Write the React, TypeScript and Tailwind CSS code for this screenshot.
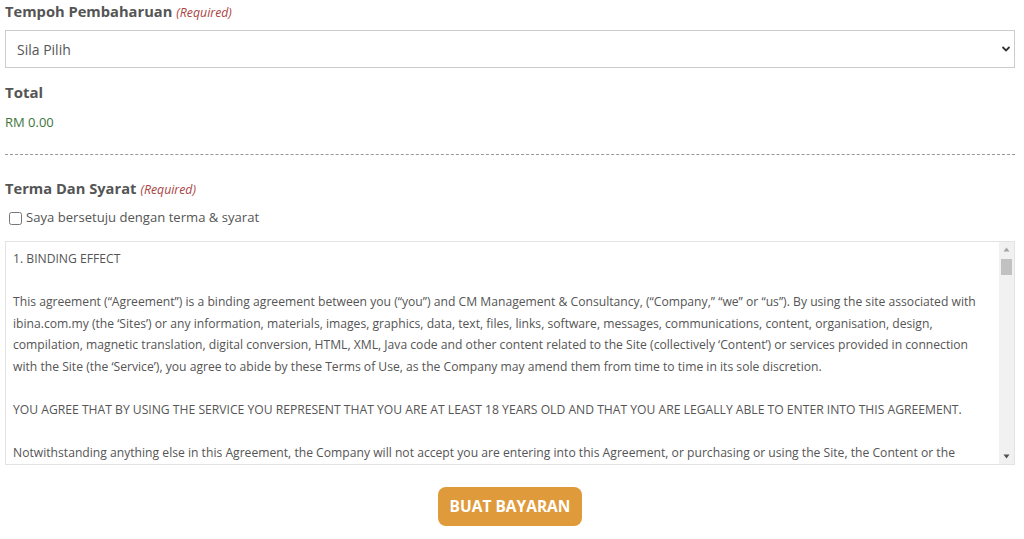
import React from 'react';

const font = { fontFamily: '"Open Sans", "Noto Sans", sans-serif' };

// lines as wrapped in the terms box (the rest sits below the scroll fold)
const terms = [
  '1. BINDING EFFECT',
  '',
  'This agreement (“Agreement”) is a binding agreement between you (“you”) and CM Management & Consultancy, (“Company,” “we” or “us”). By using the site associated with',
  'ibina.com.my (the ‘Sites’) or any information, materials, images, graphics, data, text, files, links, software, messages, communications, content, organisation, design,',
  'compilation, magnetic translation, digital conversion, HTML, XML, Java code and other content related to the Site (collectively ‘Content’) or services provided in connection',
  'with the Site (the ‘Service’), you agree to abide by these Terms of Use, as the Company may amend them from time to time in its sole discretion.',
  '',
  'YOU AGREE THAT BY USING THE SERVICE YOU REPRESENT THAT YOU ARE AT LEAST 18 YEARS OLD AND THAT YOU ARE LEGALLY ABLE TO ENTER INTO THIS AGREEMENT.',
  '',
  'Notwithstanding anything else in this Agreement, the Company will not accept you are entering into this Agreement, or purchasing or using the Site, the Content or the',
];

const Label = ({ text }: { text: string }) => (
  <div className="flex items-baseline gap-1 h-[22px] leading-[22px]">
    <span className="text-[14.7px] font-bold text-[#555]">{text}</span>
    <span className="text-[12.3px] italic text-[#a94442]">(Required)</span>
  </div>
);

export default function App() {
  return (
    <div className="w-[1024px] h-[539px] bg-white pl-[5px] overflow-hidden" style={font}>
      <div className="w-[1010px]">
        <Label text="Tempoh Pembaharuan" />

        {/* Select */}
        <div className="mt-[8px] relative">
          <select className="appearance-none w-full h-[38px] border border-[#ccc] bg-white pl-[11px] text-[14px] text-[#555] outline-none">
            <option>Sila Pilih</option>
          </select>
          <svg className="absolute right-[4px] top-[14px] pointer-events-none" width="10" height="10" viewBox="0 0 10 10">
            <path d="M1.5 3 L5 6.5 L8.5 3" fill="none" stroke="#333" strokeWidth="1.8" />
          </svg>
        </div>

        {/* Total */}
        <div className="mt-[13px] h-[22px] leading-[22px] text-[15px] font-bold text-[#555]">Total</div>
        <div className="mt-[10px] h-[18px] leading-[18px] text-[13px] text-[#3c763d]">RM 0.00</div>

        <div className="mt-[23px] border-t border-dashed border-[#999]" />

        {/* Terma */}
        <div className="mt-[22px]">
          <Label text="Terma Dan Syarat" />
        </div>
        <label className="mt-[9px] flex items-center h-[20px] text-[13.1px] text-[#555]">
          <input type="checkbox" className="ml-[4px] mr-[4px] w-[13px] h-[13px]" />
          Saya bersetuju dengan terma &amp; syarat
        </label>

        <div className="mt-[13px] h-[224px] flex border border-[#e3e3e3] bg-white">
          <div className="flex-1 overflow-hidden pl-[7px] pt-[6px] text-[12.15px] leading-[21.6px] text-[#555] whitespace-nowrap">
            {terms.map((t, i) => (
              <div key={i} className="h-[21.6px]">{t}</div>
            ))}
          </div>
          {/* scrollbar */}
          <div className="w-[15px] bg-[#f1f1f1] flex flex-col items-center">
            <svg className="mt-[5px]" width="7" height="5" viewBox="0 0 7 5">
              <path d="M3.5 0.5 L6.5 4.5 L0.5 4.5 Z" fill="#a3a3a3" />
            </svg>
            <div className="mt-[7px] w-[11px] h-[16px] bg-[#c1c1c1]" />
            <div className="flex-1" />
            <svg className="mb-[5px]" width="7" height="5" viewBox="0 0 7 5">
              <path d="M0.5 0.5 L6.5 0.5 L3.5 4.5 Z" fill="#505050" />
            </svg>
          </div>
        </div>

        <div className="mt-[22px] flex justify-center">
          <button className="w-[144px] h-[39px] rounded-[8px] bg-[#df9a3b] text-white text-[15.5px] font-bold">
            BUAT BAYARAN
          </button>
        </div>
      </div>
    </div>
  );
}
